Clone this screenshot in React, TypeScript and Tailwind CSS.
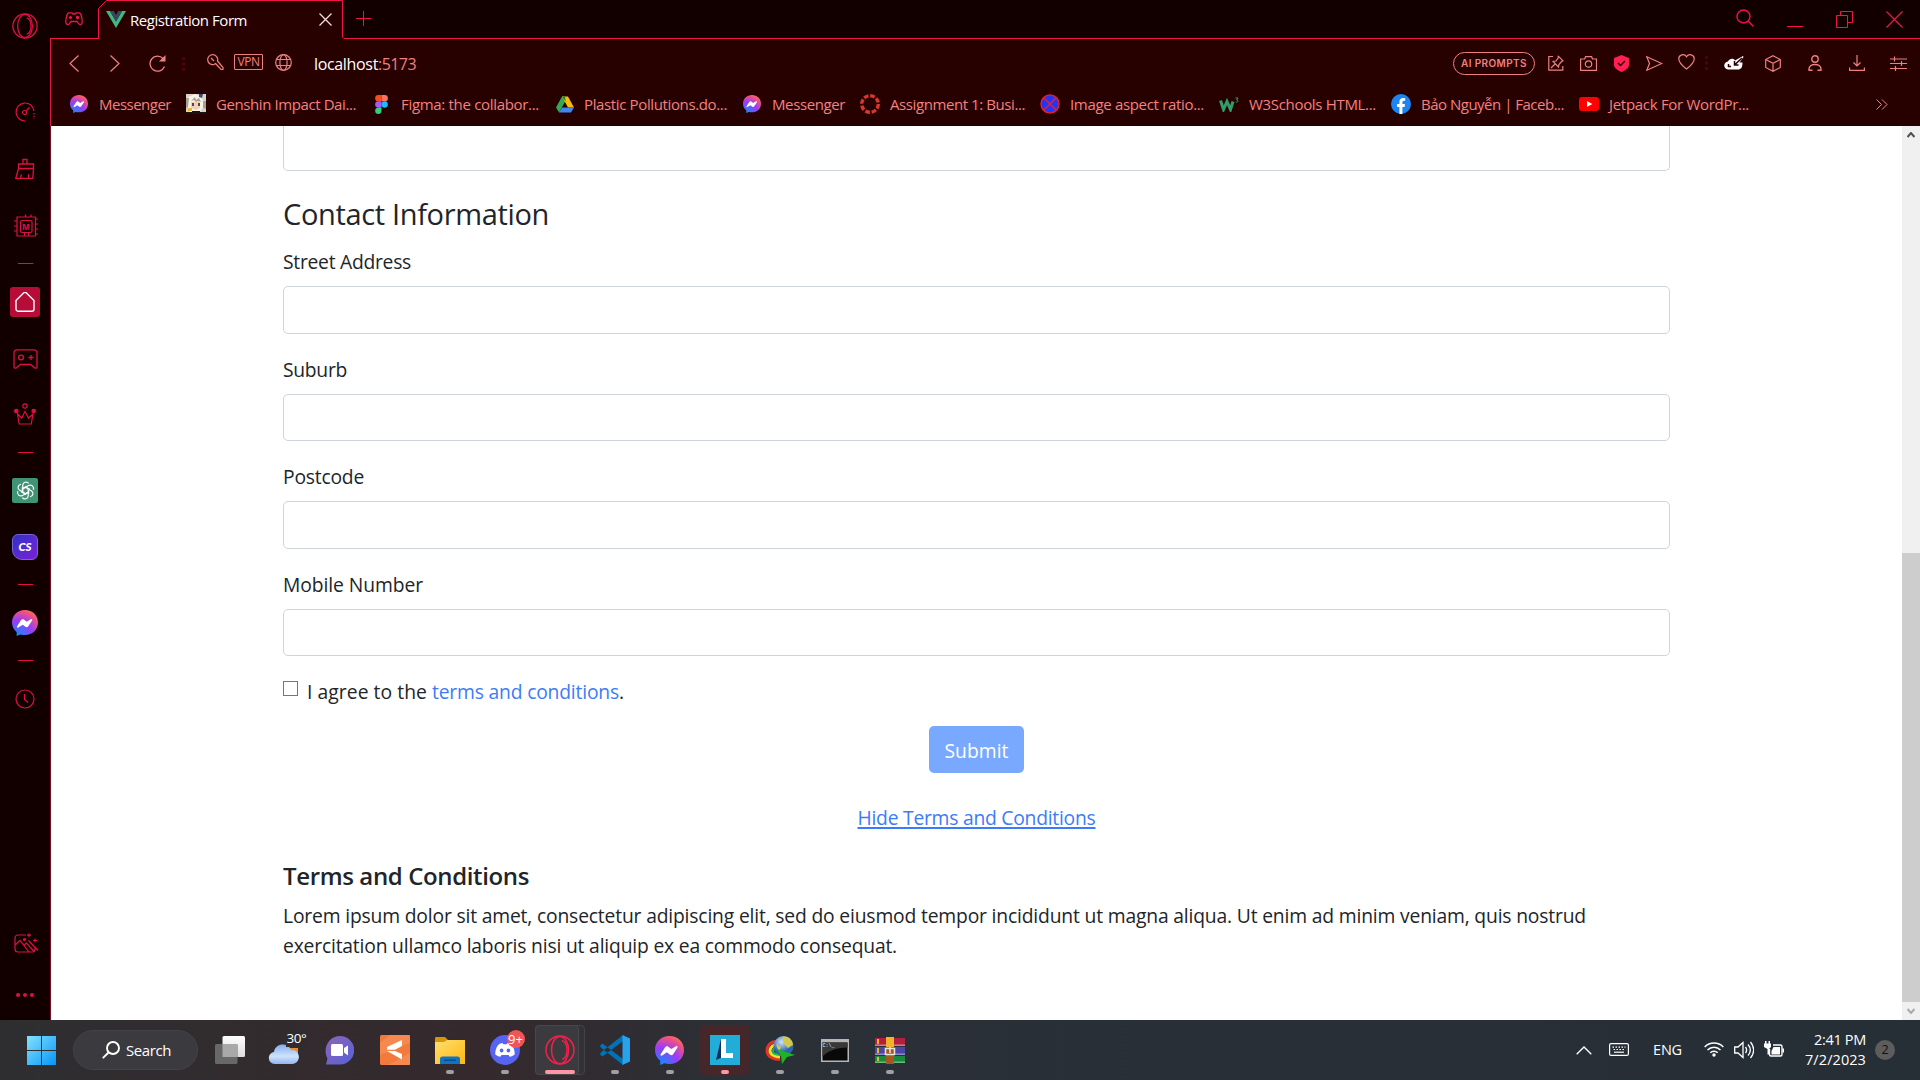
import { useLayoutEffect, useRef, useState, type ReactNode } from "react";

/** Text set to a given width by adjusting its tracking. */
function Fit({ w, className = "", children }: { w: number; className?: string; children: string }) {
  const ref = useRef<HTMLSpanElement>(null);
  const [spacing, setSpacing] = useState(0);
  useLayoutEffect(() => {
    if (ref.current) setSpacing((w - ref.current.getBoundingClientRect().width) / children.length);
  }, []);
  return (
    <span ref={ref} className={`inline-block whitespace-nowrap ${className}`} style={{ letterSpacing: `${spacing}px` }}>
      {children}
    </span>
  );
}

function Icon({ w, h = w, box, sw = 1.2, className = "", children }: {
  w: number; h?: number; box?: string; sw?: number; className?: string; children: ReactNode;
}) {
  return (
    <svg width={w} height={h} viewBox={box ?? `0 0 ${w} ${h}`} fill="none" stroke="currentColor" strokeWidth={sw}
      className={`block shrink-0 ${className}`}>
      {children}
    </svg>
  );
}

function Cell({ className = "", children }: { className?: string; children: ReactNode }) {
  return <div className={`flex w-6 shrink-0 items-center justify-center ${className}`}>{children}</div>;
}

function Messenger({ s, id }: { s: number; id: string }) {
  return (
    <Icon w={s} box="0 0 28 28" sw={0}>
      <defs>
        <radialGradient id={id} cx="0.2" cy="1" r="1.1">
          <stop offset="0" stopColor="#0a90ff" />
          <stop offset="0.55" stopColor="#9a3cf8" />
          <stop offset="0.85" stopColor="#ea5088" />
          <stop offset="1" stopColor="#ff6a60" />
        </radialGradient>
      </defs>
      <path fill={`url(#${id})`} d="M14 0C6 0 0 5.8 0 13.5c0 4.4 1.8 7.600 5 10.200V28l4-1.700c1.600.5 3.200.7 5 .7 8 0 14-5.800 14-13.500S22 0 14 0Z" />
      <path fill="#fff" d="m5.500 17.600 4.300-6.800c.7-1 2-1.200 3-.5l3 2.300 4.500-2.700c.9-.6 2 .4 1.400 1.300l-4.200 6.400c-.7 1-2 1.200-3 .5l-3-2.300-4.600 3c-.9.6-2-.3-1.400-1.200Z" />
    </Icon>
  );
}

function Opera({ s, sw }: { s: number; sw: number }) {
  return (
    <Icon w={s} box="0 0 30 30" sw={sw}>
      <circle cx="15" cy="15" r="14" />
      <ellipse cx="15" cy="15" rx="8.500" ry="13.500" />
      <path d="M17 5.500c3 1 5 5 5 9.500s-2 8.500-5 9.500" />
    </Icon>
  );
}

function Divider({ className }: { className: string }) {
  return <div className={`h-px w-[15px] shrink-0 bg-[#e01043] ${className}`} />;
}

function Side({ className = "", children }: { className?: string; children: ReactNode }) {
  return <div className={`flex h-[38px] shrink-0 items-center justify-center ${className}`}>{children}</div>;
}

function Sidebar() {
  return (
    <aside className="flex w-[50px] shrink-0 flex-col items-center bg-[#120000] text-[#dc1142]">
      <div className="flex h-[51px] items-center"><Opera s={26} sw={1.500} /></div>
      <Side className="mt-[42px]">
        <Icon w={20}>
          <path d="M10.500 19A9 9 0 1 1 19 9" />
          <path d="M19 11v6" strokeDasharray="1.500 1.300" />
          <circle cx="9.500" cy="10.500" r="2" />
          <path d="m11 9 3.500-3.500" />
        </Icon>
      </Side>
      <Side className="mt-[18px]">
        <Icon w={20} h={21} sw={1.300}>
          <path d="M8 6V1.500h4V6M3.500 6h15v4.500h-15ZM3.500 10.500.8 20.300h17l.7-9.800M5.500 20.300l1-4M13.500 20.300v-4" />
        </Icon>
      </Side>
      <Side className="mt-5 ml-[2px]">
        <div className="relative">
          <Icon w={24}>
            <path d="M3 22V3h18.500v19Z" strokeLinejoin="round" />
            <rect x="6.500" y="6.500" width="11.500" height="12" rx="1.500" />
            <path d="M11.500 3V.5M17 3V.5M10.500 22v-3.500M14.500 22v-3.500M21.500 5H24M21.500 10H24M21.500 15H24M21.500 20H24M3 7H0M3 12H0M3 17H0" />
          </Icon>
          <span className="absolute inset-0 flex items-center justify-center pt-px font-['Inter'] text-[8px] font-bold leading-none">M</span>
        </div>
      </Side>
      <Divider className="mt-[18px]" />
      <div className="mt-[23px] flex size-[30px] shrink-0 items-center justify-center rounded-[3px] bg-[#b80c38] text-white">
        <Icon w={20} sw={1.400}><path d="M1 8.500 8.300 1.200c.9-.9 2.500-.9 3.400 0L19 8.500V17a2.300 2.300 0 0 1-2.300 2.300H3.300A2.300 2.300 0 0 1 1 17Z" /></Icon>
      </div>
      <Side className="mt-[23px]">
        <Icon w={25} h={20} sw={1.300}>
          <path d="M4 .8h17a3 3 0 0 1 3 3V18c0 1.200-1.300 1.500-2.200.9L17.500 15.500h-10L3.200 18.900C2.300 19.500 1 19.200 1 18V3.800a3 3 0 0 1 3-3Z" />
          <circle cx="8" cy="8.500" r="2.400" />
          <path d="M15.500 8.500h5M18 6v5" />
        </Icon>
      </Side>
      <Side className="mt-[17px]">
        <Icon w={22} h={22}>
          <path d="m3.500 11 1.700 10h12L19 11l-4.500 4L11 8.500 7.700 15Z" />
          <circle cx="11" cy="3" r="2.200" />
          <circle cx="2.300" cy="8" r="1.700" fill="currentColor" />
          <circle cx="19.700" cy="8" r="1.700" fill="currentColor" />
        </Icon>
      </Side>
      <Divider className="mt-[19px]" />
      <Side className="mt-[18px]">
        <div className="flex h-[25px] w-[26px] items-center justify-center rounded-[2px] bg-[#3f9476] text-white">
          <Icon w={19} box="0 0 18 18" sw={1.1}>
            {[0, 60, 120, 180, 240, 300].map((a) => (
              <path key={a} transform={`rotate(${a} 9 9)`} d="M6.400 7.500V4.200a3.100 3.100 0 0 1 5.600-1.900M6.400 7.500l3-1.700 3.700 2.100" />
            ))}
          </Icon>
        </div>
      </Side>
      <Side className="mt-[19px]">
        <div className="flex size-[26px] items-center justify-center rounded-[6px] rounded-bl-[10px] border border-[#7a62d8] bg-linear-to-br from-[#2c2fc4] to-[#7a1cd8] font-['Lato'] text-[11.500px] font-black italic text-white">
          CS
        </div>
      </Side>
      <Divider className="mt-[18px]" />
      <Side className="mt-[19px]"><Messenger s={26} id="m-side" /></Side>
      <Divider className="mt-[18px]" />
      <Side className="mt-[19px]">
        <Icon w={20}><circle cx="10" cy="10" r="9" /><path d="M9.500 5v5.500l3.500 3" /></Icon>
      </Side>
      <Side className="mt-[206px]">
        <Icon w={25} h={20} className="ml-[2px]">
          <path d="M12 2H4a3 3 0 0 0-3 3v11a3 3 0 0 0 3 3h14a3 3 0 0 0 3-3v-1M1 12l5-4.500L15 19M9.500 12.500l3-2.500 8 9M14.500 7.500 24 17.500M15 .2v4M13 2.200h4M21 5.500v4M19 7.500h4" />
          <circle cx="10.500" cy="6.500" r="1" fill="currentColor" />
        </Icon>
      </Side>
      <Side className="mt-[14px]">
        <Icon w={18} h={4} sw={0}>
          <g fill="currentColor"><circle cx="2" cy="2" r="2" /><circle cx="9" cy="2" r="2" /><circle cx="16" cy="2" r="2" /></g>
        </Icon>
      </Side>
    </aside>
  );
}

function TitleBar() {
  return (
    <div className="flex h-[39px] shrink-0 bg-[#120000] text-[#ee1549]">
      <div className="flex w-12 shrink-0 items-center justify-center border-b border-[#ee1549]">
        <Icon w={18} h={14} sw={1.3}>
          <path d="M4 .8h3l1 1.200h2l1-1.200h3c2 0 3.200 5 3.200 9 0 3.500-2.500 3.900-4 1.200L12 9.500H6L4.800 11C3.300 13.700.8 13.300.8 9.800.8 5.800 2 .8 4 .8Z" />
          <path d="M4 5.500h3M5.500 4v3" />
          <circle cx="12.500" cy="5.500" r="1" fill="currentColor" />
        </Icon>
      </div>
      <div className="relative flex w-[247px] shrink-0 items-center bg-[#270000]">
        <Icon w={247} h={39} sw={1} className="absolute left-0 top-0">
          <path fill="#120000" stroke="none" d="M0 0h9L0 9ZM245 0h2v38h-2Z" />
          <path d="M.5 39V8.500l8-8h236V37l1.500 1.500h2" />
        </Icon>
        <Icon w={20} h={17} sw={0} className="ml-2">
          <path fill="#41b883" d="M0 0h4l6 10.400L16 0h4L10 17Z" />
          <path fill="#35495e" d="M4 0h3.700L10 4l2.300-4H16l-6 10.400Z" />
        </Icon>
        <Fit w={117} className="ml-1 text-[15px] leading-5 text-white">Registration Form</Fit>
        <Icon w={13} sw={1.300} className="ml-[72px] text-[#f4dede]"><path d="m.5.5 12 12M12.500.5l-12 12" /></Icon>
      </div>
      <div className="flex flex-1 items-center border-b border-[#ee1549]">
        <Icon w={15} sw={1} className="mb-px ml-[11px]"><path d="M7.500 0v15M0 7.500h15" /></Icon>
        <Icon w={18} className="mb-[2px] ml-auto" sw={1.400}><circle cx="7.500" cy="7.500" r="6.500" /><path d="m12 12 5.500 5.500" /></Icon>
        <Icon w={16} h={16} sw={1} className="ml-[33px]"><path d="M0 15.500h16" /></Icon>
        <Icon w={17} sw={1} className="ml-[33px]"><path d="M.5 4.500h11v12H.5ZM4.500 4.500v-4h12v11h-5" /></Icon>
        <Icon w={17} sw={1.200} className="ml-[33px] mr-[17px]"><path d="m.5.5 16 16M16.500.5l-16 16" /></Icon>
      </div>
    </div>
  );
}

function DotSeparator({ className }: { className: string }) {
  return (
    <Icon w={3} h={14} sw={0} className={className}>
      <path fill="#4a0509" d="M0 0h3v3H0ZM0 5.500h3v3H0ZM0 11h3v3H0Z" />
    </Icon>
  );
}

function AddressBar() {
  return (
    <div className="flex h-[49px] shrink-0 items-center text-[#f08080]">
      <Cell className="ml-[11px]"><Icon w={10} h={17}><path d="M9.500.5 1 8.500l8.500 8" /></Icon></Cell>
      <Cell className="ml-[17px]"><Icon w={10} h={17}><path d="m.5.5 8.500 8-8.500 8" /></Icon></Cell>
      <Cell className="ml-[18px]">
        <Icon w={17} h={17} sw={1.300}><path d="M15.500 11.500A7.500 7.500 0 1 1 14 3.500" /><path fill="currentColor" stroke="none" d="M16.500 0v6.500H10Z" /></Icon>
      </Cell>
      <DotSeparator className="ml-[13px]" />
      <Cell className="ml-[18px] mb-[3px]">
        <Icon w={17} h={17}><path d="M8.500 9.500 14 15.500h2v-2L10.500 7A5 5 0 1 0 7 10.500ZM4 4l3 3" /></Icon>
      </Cell>
      <div className="mb-[3px] ml-[7px] flex h-4 w-[29px] shrink-0 items-center justify-center rounded-[1px] border border-current">
        <Fit w={22} className="text-[12px] leading-none">VPN</Fit>
      </div>
      <Cell className="mb-[3px] ml-2">
        <Icon w={17}><circle cx="8.500" cy="8.500" r="7.800" /><ellipse cx="8.500" cy="8.500" rx="3.600" ry="7.800" /><path d="M1.500 5.500h14M1.500 11.500h14" /></Icon>
      </Cell>
      <div className="ml-[19px] flex text-[16px] leading-5">
        <Fit w={64} className="text-white">localhost</Fit>
        <Fit w={38}>:5173</Fit>
      </div>
      <div className="mb-px ml-auto flex items-center">
        <div className="flex h-[23px] w-[82px] items-center justify-center rounded-full border border-current font-['Inter'] text-[10px] font-semibold">
          <Fit w={66} className="leading-none">AI PROMPTS</Fit>
        </div>
        <Cell className="ml-[9px]">
          <Icon w={16}><path d="M5 1.500H.8v13.700h14V11M10 .8l5 5-1.500.7-2.500 3-.5 2.500L5 6.500 8 6l2.500-3.500ZM7 9l-4 4" /></Icon>
        </Cell>
        <Cell className="ml-2">
          <Icon w={17} h={15}><path d="M.6 3h4l1-2.300h6L12.500 3h4v11.400H.6Z" /><circle cx="8.500" cy="8" r="3.200" /></Icon>
        </Cell>
        <Cell className="ml-[9px]">
          <Icon w={15} h={17} sw={1.500}><path fill="#ff1f50" stroke="none" d="M7.500 0 15 3v7c0 3-4 5.500-7.500 7C4 15.500 0 13 0 10V3Z" /><path stroke="#270000" d="m4 8 2.500 2.500L11 6" /></Icon>
        </Cell>
        <Cell className="ml-[9px]"><Icon w={17} h={15}><path d="m.8.8 15 6.700-15 6.700L3.500 7.500Z" /></Icon></Cell>
        <Cell className="mb-[2px] ml-2"><Icon w={17} h={16}><path d="M8.500 15C4 11.500.8 8.500.8 5A4.100 4.100 0 0 1 8.500 2.800 4.100 4.100 0 0 1 16.200 5c0 3.500-3.200 6.500-7.700 10Z" /></Icon></Cell>
        <DotSeparator className="ml-[7px]" />
        <Cell className="ml-[14px] text-white">
          <Icon w={20} h={14} sw={1.500}>
            <path fill="#fff" stroke="none" d="M4 13.500C-1 13-1 6 4 5.500 5.500 2 10 2 11 4.500L19 0l.5 1-4 5.500h3c0 5-1.500 7-4.500 7Z" />
            <path stroke="#270000" d="m18 2-7 6.500M10.500 5v4h4M4.500 8v2.500H7" />
          </Icon>
        </Cell>
        <Cell className="ml-[15px]"><Icon w={16} h={17}><path d="m8 .7 7.300 3.800v8L8 16.300.7 12.500v-8ZM.7 4.500 8 8.300l7.300-3.800M8 8.300v8" /></Icon></Cell>
        <Cell className="ml-[18px]"><Icon w={14} h={16} sw={1.400}><circle cx="7" cy="4" r="3.200" /><path d="M1 15.500V14c0-6 12-6 12 0v1.500M4.500 15.200h-4M13.500 15.200h-4" /></Icon></Cell>
        <Cell className="ml-[18px]"><Icon w={16} h={16}><path d="M8 0v11M4.500 7.500 8 11l3.500-3.500M.6 12.500v2.800h14.800v-2.800" /></Icon></Cell>
        <Cell className="ml-[17px] mr-[10px]"><Icon w={17} h={15}><path d="M0 3h17M0 7.500h17M0 12.500h17M4.500.5v5M11.500 5v5M5.500 10v5" /></Icon></Cell>
      </div>
    </div>
  );
}

const bookmarks: { label: string; w: number; icon: ReactNode }[] = [
  { label: "Messenger", w: 72, icon: <Messenger s={18} id="m-b1" /> },
  {
    label: "Genshin Impact Dai...", w: 140,
    icon: (
      <Icon w={20} sw={0}>
        <path fill="#d8d4c4" d="M0 0h20v20H0Z" />
        <path fill="#f7f1e6" d="M2 3 9 0l7 3 2 9-4 6H4L1 11Z" />
        <path fill="#f3cfb4" d="M5 8h9v6l-4 2-5-2Z" />
        <path fill="#3c4a78" d="M13 0h4l-1 4-3-1ZM6 9h2v3H6ZM12 9h2v3h-2Z" />
        <path fill="#a8a093" d="M0 4h3l-1 9-2 1ZM17 7h3v8l-3-1ZM5 7l4-4 1 3 3-2 2 4-3-1-2 1-2-2Z" />
        <path fill="#e8b93a" d="M2 14h4v3H2Z" />
        <path fill="#181414" d="M0 18h20v2H0ZM6 17h8v1H6Z" />
      </Icon>
    ),
  },
  {
    label: "Figma: the collabor...", w: 138,
    icon: (
      <Icon w={13} h={19} box="0 0 12 18" sw={0}>
        <path fill="#f24e1e" d="M3 0h3v6H3a3 3 0 0 1 0-6Z" /><path fill="#ff7262" d="M6 0h3a3 3 0 0 1 0 6H6Z" />
        <path fill="#a259ff" d="M3 6h3v6H3a3 3 0 0 1 0-6Z" /><circle fill="#1abcfe" cx="9" cy="9" r="3" />
        <path fill="#34cf7b" d="M3 12h3v3a3 3 0 1 1-3-3Z" />
      </Icon>
    ),
  },
  {
    label: "Plastic Pollutions.do...", w: 143,
    icon: (
      <Icon w={18} h={19} box="0 0 18 16" sw={0} className="ml-[2px]">
        <path fill="#34a853" d="M6 0h3l1.500 2.700L3 16 0 11Z" /><path fill="#fbbc04" d="M6 0h6l6 11h-6Z" /><path fill="#4285f4" d="M6 11h12l-3 5H3Z" />
        <path fill="#188038" d="M6 0h3l.7 5Z" />
      </Icon>
    ),
  },
  { label: "Messenger", w: 73, icon: <Messenger s={18} id="m-b2" /> },
  { label: "Assignment 1: Busi...", w: 135, icon: <Icon w={20} sw={3.400}><circle cx="10" cy="10" r="8.300" stroke="#d8382b" strokeDasharray="4.700 1.819" /></Icon> },
  {
    label: "Image aspect ratio...", w: 134,
    icon: <Icon w={20} sw={1.500}><circle cx="10" cy="10" r="9" fill="#1f35ff" stroke="#e0202c" /><path stroke="#e0202c" d="m4 4 12 12M16 4 4 16" /></Icon>,
  },
  {
    label: "W3Schools HTML...", w: 127,
    icon: (
      <Icon w={20} h={15} sw={3}>
        <path stroke="#2f9e6b" d="m1.500 3.500 3 9 3.500-8 3.500 8 2.500-8" /><path stroke="#2f9e6b" strokeWidth="1" d="M16.500 1h2.500l-1.300 2c2 0 1.700 2.800-1 2" />
      </Icon>
    ),
  },
  {
    label: "Bảo Nguyễn | Faceb...", w: 143,
    icon: <Icon w={20} sw={0}><circle cx="10" cy="10" r="10" fill="#1b86f3" /><path fill="#fff" d="M8.400 20v-7H6v-3h2.400V8c0-2.700 1.500-4 3.800-4l2 .2v2.500H13c-1.200 0-1.600.8-1.600 1.500V10H14l-.4 3h-2.200v7Z" /></Icon>,
  },
  {
    label: "Jetpack For WordPr...", w: 140,
    icon: <Icon w={20} h={14} sw={0}><rect width="20" height="14" rx="3" fill="#f00" /><path fill="#fff" d="m8 4 5.300 3L8 10Z" /></Icon>,
  },
];

function BookmarkBar() {
  return (
    <div className="flex h-[38px] shrink-0 items-center gap-[15px] pb-[6px] pl-[18px] text-[#f58181]">
      {bookmarks.map((b, i) => (
        <div key={i} className="flex shrink-0 items-center gap-[10px]">
          <div className="flex w-5 items-center justify-center">{b.icon}</div>
          <Fit w={b.w} className="text-[15px] leading-5">{b.label}</Fit>
        </div>
      ))}
      <Icon w={12} h={11} sw={1} className="ml-auto mr-8"><path d="m.5.5 5 5-5 5M6 .5l5 5-5 5" /></Icon>
    </div>
  );
}

const fields: { label: string; w: number }[] = [
  { label: "Street Address", w: 128 },
  { label: "Suburb", w: 64 },
  { label: "Postcode", w: 81 },
  { label: "Mobile Number", w: 140 },
];

function Page() {
  return (
    <div className="flex h-[894px] shrink-0 overflow-hidden border-l border-[#7c0a28] bg-white text-[#212529]">
      <main className="flex flex-1 flex-col pl-[232px]">
        <form className="flex w-[1387px] flex-col text-[19.300px] leading-[30px]">
          <div className="h-[45px] shrink-0 rounded-b-[5px] border border-t-0 border-[#ced4da]" />
          <h4 className="mt-[25px] mb-[14px] text-[29px] leading-9"><Fit w={266}>Contact Information</Fit></h4>
          {fields.map((f) => (
            <div key={f.label} className="mb-5">
              <label className="mb-[9px] block h-[31px] pt-px"><Fit w={f.w}>{f.label}</Fit></label>
              <div className="h-[47.5px] rounded-[5px] border border-[#ced4da]" />
            </div>
          ))}
          <div className="mt-px flex h-[30px]">
            <div className="mt-1 mr-[9px] size-[15px] border-[1.500px] border-[#767676]" />
            <Fit w={120} className="mr-[5px]">I agree to the</Fit>
            <Fit w={187} className="text-[#3d7bfa]">terms and conditions</Fit>
            <span>.</span>
          </div>
          <div className="mt-[19px] flex h-[47px] w-[95px] items-center justify-center self-center rounded-[5px] bg-[#79a9ff] pt-[3px] font-medium text-white">
            <Fit w={64}>Submit</Fit>
          </div>
          <div className="mt-[30px] self-center text-[#3d7bfa]"><Fit w={238} className="underline decoration-[1.500px] underline-offset-[2px]">Hide Terms and Conditions</Fit></div>
          <h5 className="mt-[28px] text-[24px] font-semibold leading-[30px]"><Fit w={246}>Terms and Conditions</Fit></h5>
          <p className="mt-[10px] flex flex-col items-start">
            <Fit w={1303}>Lorem ipsum dolor sit amet, consectetur adipiscing elit, sed do eiusmod tempor incididunt ut magna aliqua. Ut enim ad minim veniam, quis nostrud</Fit>
            <Fit w={614}>exercitation ullamco laboris nisi ut aliquip ex ea commodo consequat.</Fit>
          </p>
        </form>
      </main>
      <div className="flex w-[18px] shrink-0 flex-col items-center bg-[#f0f0f0]">
        <div className="flex h-[18px] items-center"><Icon w={8} h={6} sw={2} className="text-[#505050]"><path d="m.5 5 3.500-4 3.500 4" /></Icon></div>
        <div className="mt-auto h-[449px] w-full bg-[#cdcdcd]" />
        <div className="flex h-[18px] items-center"><Icon w={8} h={6} sw={2} className="text-[#aaa]"><path d="m.5 1 3.500 4 3.500-4" /></Icon></div>
      </div>
    </div>
  );
}

function TaskbarApp({ mark = "", plate = "", children }: { mark?: string; plate?: string; children: ReactNode }) {
  return (
    <div className="relative flex h-[50px] w-[55px] shrink-0 items-center justify-center">
      {plate && <div className={`absolute rounded-[4px] ${plate}`} />}
      <div className="relative">{children}</div>
      {mark && <div className={`absolute bottom-px h-1 rounded-full ${mark}`} />}
    </div>
  );
}

const running = "w-2 bg-[#a0a0a3]";

function Taskbar() {
  return (
    <footer className="flex h-[60px] shrink-0 items-center bg-linear-to-r from-[#2f2e30] via-[#2b3037] via-38% to-[#262e36] text-white">
      <div className="flex h-full flex-1 items-center bg-linear-to-r from-[#2e2e30] from-0% via-[#35292d] via-25% to-transparent to-38%">
        <Icon w={29} sw={0} className="ml-[27px]">
          <defs><linearGradient id="win" x1="0" y1="0" x2="29" y2="29" gradientUnits="userSpaceOnUse"><stop stopColor="#83e2fc" /><stop offset="1" stopColor="#0795f8" /></linearGradient></defs>
          <path fill="url(#win)" d="M0 0h14v14H0ZM15 0h14v14H15ZM0 15h14v14H0ZM15 15h14v14H15Z" />
        </Icon>
        <div className="ml-[17px] flex h-10 w-[125px] shrink-0 items-center rounded-full border border-[#434246] bg-[#3b3a3e]">
          <Icon w={18} h={18} sw={1.900} className="ml-[28px]"><circle cx="11" cy="7" r="6" /><path d="M6.500 11.500.8 17.200" /></Icon>
          <Fit w={45} className="ml-[6px] pt-px text-[15px]">Search</Fit>
        </div>
        <div className="ml-1 flex">
          <TaskbarApp>
            <Icon w={30} h={28} sw={0}>
              <defs><linearGradient id="tv" x1="0" y1="0" x2="0" y2="1"><stop stopColor="#fff" /><stop offset="1" stopColor="#dcdcdc" /></linearGradient></defs>
              <rect x="7.500" width="22.500" height="21" rx="1.500" fill="url(#tv)" />
              <rect y="8" width="22.500" height="20" rx="1.500" fill="#686868" /><path fill="#a9a9a9" d="M7.500 8h15v13h-15Z" />
            </Icon>
          </TaskbarApp>
          <TaskbarApp>
            <Icon w={38} h={32} sw={0} className="ml-1">
              <defs><linearGradient id="cloud" x1="0" y1="0" x2="0" y2="1"><stop stopColor="#82adf2" /><stop offset="0.600" stopColor="#cfe2fb" /><stop offset="1" stopColor="#90b5ee" /></linearGradient></defs>
              <path fill="#f28a22" d="M22 14h8v7h-8Z" />
              <path fill="url(#cloud)" d="M7 30C-1 30-1 19 6 18c1-9 14-10 17-2 10-1 11 14 0 14Z" />
            </Icon>
            <div className="absolute -top-[4px] right-[-1px] bg-[#2f2b2e] pl-px text-[13.500px] leading-[17px]"><Fit w={20}>30°</Fit></div>
          </TaskbarApp>
          <TaskbarApp>
            <Icon w={29} sw={0}>
              <defs><linearGradient id="chat" x1="0" y1="0" x2="1" y2="1"><stop stopColor="#8d64b6" /><stop offset="1" stopColor="#5562d8" /></linearGradient></defs>
              <path fill="url(#chat)" d="M15 0a14 14 0 0 1 0 28.500H1l1.500-6C-3 12 4 0 15 0Z" />
              <rect x="6" y="8" width="12" height="12" rx="1.500" fill="#fff" /><path fill="#fff" d="m19 12 4-2.500v10L19 16.500Z" />
            </Icon>
          </TaskbarApp>
          <TaskbarApp>
            <Icon w={30} sw={0}>
              <rect width="30" height="30" rx="1.500" fill="#f27a3c" /><path fill="#f79059" d="M10 0h20v8L0 20V8ZM30 18v12H8Z" opacity=".7" />
              <path fill="#fff" d="M22 5v6l-7 3.700H7V12ZM7 16h8l7 3v5.500Z" />
            </Icon>
          </TaskbarApp>
          <TaskbarApp mark={running}>
            <Icon w={30} h={27} sw={0}>
              <path fill="#d99508" d="M0 1.500C0 .5.500 0 1.500 0H10l3 3h15.500c1 0 1.500.5 1.500 1.500V9H0Z" />
              <defs><linearGradient id="fold" x1="0" y1="0" x2="1" y2="1"><stop stopColor="#ffdf70" /><stop offset="1" stopColor="#fcb80f" /></linearGradient></defs>
              <path fill="url(#fold)" d="M0 5h9l3-2h18v24H0Z" />
              <path fill="#0f74c4" d="M5 27v-5a2.500 2.500 0 0 1 2.500-2.500h15A2.500 2.500 0 0 1 25 22v5Z" /><path fill="#0a4c8c" d="M9 22.500h12V24H9Z" />
            </Icon>
          </TaskbarApp>
          <TaskbarApp mark={running}>
            <Icon w={30} sw={0}>
              <circle cx="15" cy="15" r="15" fill="#5764f2" />
              <path fill="#fff" d="M10.500 8.500 12.500 8l.8 1.300h3.400L17.500 8l2 .5c3.500 1 5.500 7 5.200 11-1.500 1.300-3.200 2-5 2.300l-1.200-1.900h-7l-1.200 1.900c-1.800-.3-3.500-1-5-2.300-.3-4 1.700-10 5.200-11Z" />
              <ellipse cx="11.600" cy="15.500" rx="1.800" ry="2" fill="#5764f2" /><ellipse cx="18.400" cy="15.500" rx="1.800" ry="2" fill="#5764f2" />
            </Icon>
            <div className="absolute -top-[5px] -right-[5px] flex size-[18px] items-center justify-center rounded-full bg-[#f25555] text-[13px] leading-none">9+</div>
          </TaskbarApp>
          <TaskbarApp mark="w-[30px] bg-[#ff96a3]" plate="left-[2.500px] top-0 h-[50px] w-[50px] border border-[#434347] bg-[#323236]">
            <div className="absolute -left-[10px] -top-[10px] h-[50px] w-[44px] rounded-[4px] border border-[#48484c] bg-[#3b3a3e]" />
            <div className="relative text-[#f51f4b]"><Opera s={30} sw={1.500} /></div>
          </TaskbarApp>
          <TaskbarApp mark={running}>
            <Icon w={30} sw={0}>
              <path fill="#0073b8" d="M0 10.500 2.500 8.500 23 24v6L.8 12.500ZM0 19.500l2.500 2L23 6V0L.8 17.500Z" />
              <path fill="#28a2ea" d="m22.500 0 7.500 3.500v23L22.500 30Z" />
            </Icon>
          </TaskbarApp>
          <TaskbarApp mark={running}><Messenger s={29} id="m-task" /></TaskbarApp>
          <TaskbarApp mark="w-2 bg-[#ff96a3]" plate="left-[2.500px] top-0 size-[50px] bg-[#452629]">
            <Icon w={30} sw={0}>
              <path fill="#22add8" d="M0 0h30v30H0Z" /><path fill="#0d3158" d="m11 4-5 21 7-3Z" /><path fill="#fff" d="M11 4h5v14h7v5H11Z" />
            </Icon>
          </TaskbarApp>
          <TaskbarApp mark={running}>
            <Icon w={30} h={28} sw={0}>
              <defs><radialGradient id="globe" cx=".4" cy=".3"><stop stopColor="#cfe4f5" /><stop offset="1" stopColor="#2c64b4" /></radialGradient></defs>
              <path d="M12 5.500C5 5.500 2 10 2 15c0 6 7 8.500 13 8.500" stroke="#e43424" strokeWidth="3" />
              <path d="M13 8.500c-5 0-8 3-8 6.500s5 6 10 6" stroke="#f6dc30" strokeWidth="3" />
              <path d="M13 11.500c-4 0-5 2-5 4s4 3 8 3" stroke="#25b43d" strokeWidth="2.500" />
              <circle cx="18.500" cy="10" r="10" fill="url(#globe)" /><path fill="#d2c94c" d="M17 1c6-2 11 3 11 8l-5 3-4-4ZM11 8l5 3-2 5Z" />
              <path fill="#20b520" d="m12 13 18 6-8 2-5 7-1-8Z" />
            </Icon>
          </TaskbarApp>
          <TaskbarApp mark={running}>
            <Icon w={28} h={23} sw={0}>
              <path fill="#b4b6b8" d="M0 0h28v23H0Z" /><path fill="#090909" d="M1.500 3.500h25V21.500h-25Z" /><path fill="#383838" d="M1.500 3.500h25v5c-12 0-20 4-25 9Z" />
            </Icon>
            <div className="absolute left-[2px] top-[5px] font-['Liberation_Mono'] text-[5px] leading-none">C:\_</div>
          </TaskbarApp>
          <TaskbarApp mark={running}>
            <Icon w={30} h={27} sw={0}>
              <path fill="#b3203d" d="M0 1h30v8H0Z" /><path fill="#4a47a8" d="M0 10h30v8H0Z" /><path fill="#178a3c" d="M0 19h30v7H0Z" />
              <path fill="#f1d7dd" d="M0 7.500h30V9H0Z" opacity=".5" /><path fill="#cfd0ee" d="M0 16.500h30V18H0Z" opacity=".5" /><path fill="#bfe8c8" d="M0 24.500h30V26H0Z" opacity=".5" />
              <path fill="#f0b429" d="M2 2h2v5H2ZM2 11h2v5H2ZM2 20h2v4H2ZM11 0h8v10h-8Z" /><path fill="#a8561f" d="M11 10h8v17h-8Z" />
              <path stroke="#e8e4dc" strokeWidth="1.500" d="M10.500 11.500h9v6h-9ZM15 10v6" />
            </Icon>
          </TaskbarApp>
        </div>
        <div className="ml-auto flex items-center">
          <Icon w={16} h={9} sw={1.400}><path d="m.7 8.300 7.300-7.300 7.300 7.300" /></Icon>
          <Icon w={20} h={13} sw={1.200} className="ml-[17px] mb-px">
            <rect x=".6" y=".6" width="18.800" height="11.800" rx="1.500" /><path d="M3.500 4.200h13M4.500 6.500h11" strokeDasharray="1.500 1.500" /><path d="M5 9.200h10" />
          </Icon>
          <Fit w={29} className="ml-6 text-[14.500px]">ENG</Fit>
          <Icon w={20} h={16} sw={1.500} className="mb-[2px] ml-[22px]">
            <path d="M.7 6a13 13 0 0 1 18.600 0M3.500 9a9 9 0 0 1 13 0M6.300 11.800a5.300 5.300 0 0 1 7.400 0" /><circle cx="10" cy="14" r="1.700" fill="currentColor" stroke="none" />
          </Icon>
          <Icon w={20} h={18} sw={1.300} className="ml-[10px]">
            <path d="M.7 6H4l5-4.500v15L4 12H.7ZM11.500 6c1.500 2 1.500 4 0 6M14 3.500c3 3.500 3 7.500 0 11M16.500 1c4 5 4 11 0 16" />
          </Icon>
          <Icon w={20} h={17} sw={1.400} className="mb-[2px] ml-[10px]">
            <path d="M9 4h7.500a1.500 1.500 0 0 1 1.500 1.500v8a1.500 1.500 0 0 1-1.500 1.500H7a1.500 1.500 0 0 1-1.500-1.500V8" />
            <path fill="currentColor" stroke="none" d="M9.500 6H16v7.500H7.500V10ZM18.500 7.500H20v4h-1.500ZM1 0h1.500v2.500h2V0H6v2.500h1V6L5 8v5.500H3.500V8L0 6V2.500h1Z" />
          </Icon>
          <div className="ml-[21px] flex w-[61px] flex-col items-end text-[14.500px] leading-5">
            <Fit w={52}>2:41 PM</Fit>
            <Fit w={61}>7/2/2023</Fit>
          </div>
          <div className="ml-[9px] mr-[25px] flex size-5 items-center justify-center rounded-full bg-[#5d5d5d] text-[12.500px] leading-none text-[#111]">2</div>
        </div>
      </div>
    </footer>
  );
}

export default function App() {
  return (
    <div className="flex h-[1080px] w-[1920px] flex-col overflow-hidden bg-white font-['Open_Sans','Noto_Sans',sans-serif]">
      <div className="flex h-[1020px] shrink-0">
        <Sidebar />
        <div className="flex min-w-0 flex-1 flex-col bg-[#270000]">
          <TitleBar />
          <div className="flex h-[87px] shrink-0 flex-col border-l border-[#e01549]">
            <AddressBar />
            <BookmarkBar />
          </div>
          <Page />
        </div>
      </div>
      <Taskbar />
    </div>
  );
}
